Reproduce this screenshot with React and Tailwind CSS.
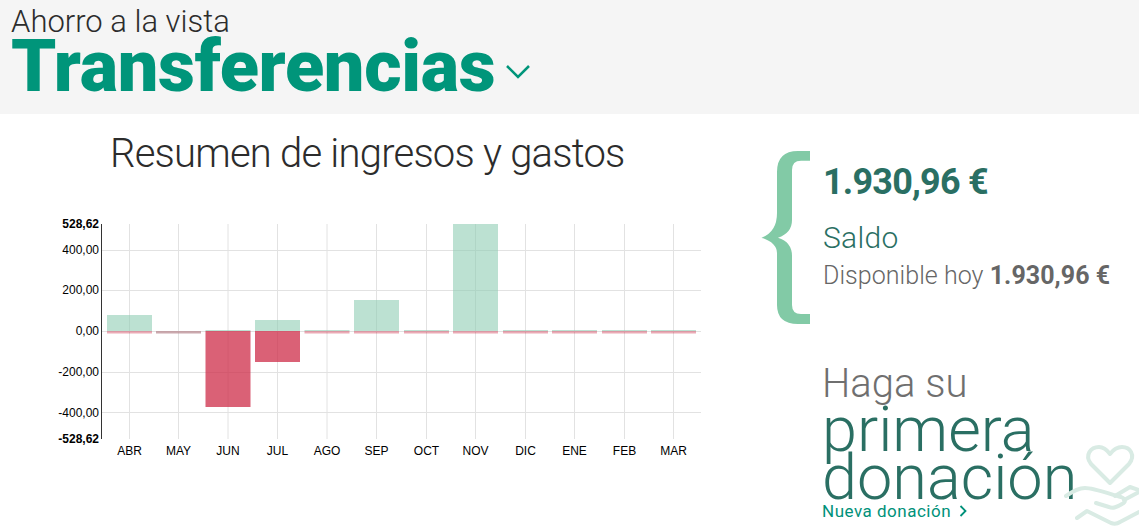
const GRID_Y = [250.5, 290.5, 331.5, 372.5, 412.5];
const MONTHS = [
  { label: "ABR", x: 129.5, up: 16, down: 2.5 },
  { label: "MAY", x: 178.5, up: 0, down: 2.5, muted: true },
  { label: "JUN", x: 228, up: 1, down: 76 },
  { label: "JUL", x: 277.5, up: 11, down: 31 },
  { label: "AGO", x: 327, up: 1, down: 2.5 },
  { label: "SEP", x: 376.5, up: 31, down: 2.5 },
  { label: "OCT", x: 426.5, up: 1, down: 2.5 },
  { label: "NOV", x: 475.5, up: 107, down: 2.5 },
  { label: "DIC", x: 525.5, up: 1, down: 2.5 },
  { label: "ENE", x: 574.5, up: 1, down: 2.5 },
  { label: "FEB", x: 624.5, up: 1, down: 2.5 },
  { label: "MAR", x: 673.5, up: 1, down: 2.5 },
];
const Y_LABELS = [
  { text: "528,62", y: 228, bold: true },
  { text: "400,00", y: 254 },
  { text: "200,00", y: 294 },
  { text: "0,00", y: 335 },
  { text: "-200,00", y: 376 },
  { text: "-400,00", y: 417 },
  { text: "-528,62", y: 443, bold: true },
];

const barFill = (m) => {
  if (m.muted) return { fill: "#b98c93", fillOpacity: 0.75 };
  return { fill: "#cd2c48", fillOpacity: m.down > 3 ? 0.75 : 0.4 };
};

const Chart = () => (
  <svg width="720" height="250" viewBox="0 214 720 250" className="block font-['Liberation_Sans',sans-serif]">
    {GRID_Y.map((y) => (
      <line key={y} x1="102" x2="701" y1={y} y2={y} stroke="#e2e2e2" />
    ))}
    {MONTHS.map((m) => (
      <line key={m.label} x1={m.x} x2={m.x} y1="224" y2="439" stroke="#e2e2e2" />
    ))}
    {MONTHS.map((m) => (
      <g key={m.label}>
        <rect x={m.x - 22.5} y={331 - m.up} width="45" height={m.up} fill="#8ccbb1" fillOpacity="0.58" />
        <rect x={m.x - 22.5} y="331" width="45" height={m.down} {...barFill(m)} />
      </g>
    ))}
    <line x1="101.5" x2="101.5" y1="224" y2="439" stroke="#333" />
    {Y_LABELS.map((l) => (
      <text key={l.text} x="99" y={l.y} textAnchor="end" fontSize="12" fontWeight={l.bold ? 700 : 400} fill="#000">{l.text}</text>
    ))}
    {MONTHS.map((m) => (
      <text key={m.label} x={m.x} y="455" textAnchor="middle" fontSize="12" fill="#000">{m.label}</text>
    ))}
  </svg>
);

const Brace = () => (
  <svg width="50" height="175" viewBox="0 0 50 175" className="shrink-0">
    <path
      d="M49 1H37Q16 1 16 22V63Q16 82 0.5 87.7Q16 93 16 103V155Q16 174 37 174H49V164H40Q31 164 31 155V106Q31 92 17 87.7Q31 83 31 70V20Q31 10.7 40 10.7H49Z"
      fill="#82caa6"
    />
  </svg>
);

const HandHeart = () => (
  <svg width="84" height="87" viewBox="0 0 84 87" fill="none" stroke="#d9ebe4" strokeWidth="4" strokeLinecap="round" strokeLinejoin="round" className="absolute right-0 bottom-0">
    <path d="M55 43L36 24C29 15 36 7 44 7C49 7 52 10 55 14C58 10 62 7 67 7C75 7 81 15 74 24Z" />
    <path d="M11 56C18 51 24 48 30 48C38 48 52 53 66 57C71 59 71 62 67 64C62 67 58 69 54 67L41 63" />
    <path d="M60 56L75 47L84 50" />
    <path d="M69 60L84 52" />
    <path d="M22 78L32 71L56 83C59 84 62 84 65 82L84 72" />
  </svg>
);

export default function App() {
  return (
    <div className="h-[527px] w-[1139px] overflow-hidden bg-white font-['Roboto',sans-serif]">
      <header className="h-[114px] bg-[#f5f5f5] pl-[11px] pt-[5px]">
        <div className="text-[31px] font-light leading-[34px] text-[#2c2c2c]">Ahorro a la vista</div>
        <div className="-mt-[3px] flex items-center">
          <h1 className="text-[72px] font-black leading-[62px] tracking-[-0.3px] text-[#00957a]">Transferencias</h1>
          <svg width="26" height="16" viewBox="0 0 26 16" fill="none" stroke="#00957a" strokeWidth="2.5" className="ml-[10px] mt-[10px]">
            <path d="M2 2L13 13L24 2" />
          </svg>
        </div>
      </header>

      <main className="flex">
        <section className="w-[748px] shrink-0">
          <h2 className="pl-[110px] pt-[15px] text-[40px] font-light leading-[50px] tracking-[-0.78px] text-[#2c2c2c]">Resumen de ingresos y gastos</h2>
          <div className="mt-[35px]">
            <Chart />
          </div>
        </section>

        <aside className="relative flex-1 h-[413px]">
          <div className="flex items-start pl-[13px] pt-[36px]">
            <Brace />
            <div className="ml-[12px] pt-[11px]">
              <div className="text-[36px] font-bold leading-[42px] tracking-[-0.8px] text-[#2a6f63]">1.930,96 €</div>
              <div className="mt-[17px] text-[30px] font-light leading-[36px] tracking-[0.3px] text-[#2a6f63]">Saldo</div>
              <div className="mt-[4px] whitespace-nowrap text-[25px] font-light leading-[32px] tracking-[0.05px] text-[#666]">
                Disponible hoy <span className="font-bold">1.930,96 €</span>
              </div>
            </div>
          </div>

          <div className="pl-[74px] pt-[36px]">
            <div className="text-[40px] font-light leading-[45px] text-[#6f6f6f]">Haga su</div>
            <div className="text-[63px] font-light leading-[47px] text-[#2a6f63]">primera</div>
            <div className="text-[63px] font-light leading-[49px] text-[#2a6f63]">donación</div>
            <div className="flex items-center gap-[8px] text-[17px] leading-[18px] tracking-[0.5px] text-[#00917a]">
              Nueva donación
              <svg width="8" height="12" viewBox="0 0 8 12" fill="none" stroke="#00917a" strokeWidth="1.8"><path d="M1.5 1L6.5 6L1.5 11" /></svg>
            </div>
          </div>
          <HandHeart />
        </aside>
      </main>
    </div>
  );
}
